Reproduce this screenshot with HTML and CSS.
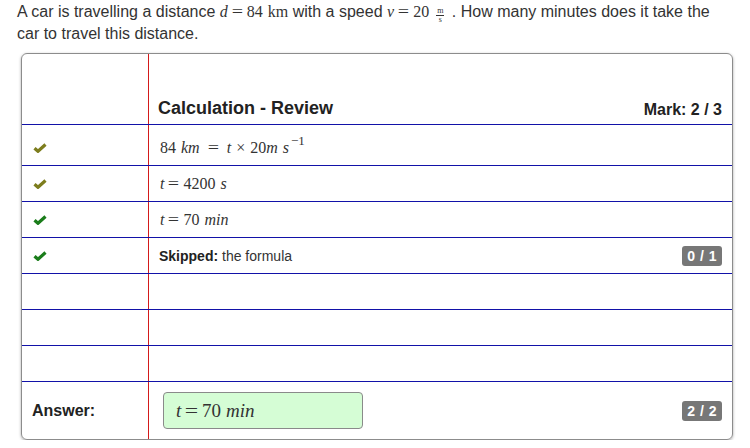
FILE: index.html
```html
<!DOCTYPE html>
<html>
<head>
<meta charset="utf-8">
<link rel="stylesheet" href="styles.css">
</head>
<body>
<p class="question">A car is travelling a distance <span class="m"><i>d</i><span class="rel">=</span>84<span class="u">km</span></span> with a speed <span class="m"><i>v</i><span class="rel">=</span>20 <span class="frac"><span class="num">m</span><span class="den">s</span></span></span> . How many minutes does it take the car to travel this distance.</p>

<div class="card">
  <div class="row header">
    <div class="cell left"></div>
    <div class="cell right">
      <span class="title">Calculation - Review</span>
      <span class="mark">Mark: 2 / 3</span>
    </div>
  </div>
  <div class="row first">
    <div class="cell left"><svg class="check olive" viewBox="0 0 14 10"><path d="M1.5 5.2 L5 8.3 L12.5 1.5" /></svg></div>
    <div class="cell right"><span class="m eq">84<i class="u">km</i><span class="rel wide">=</span><i>t</i><span class="bin">×</span>20<i>m</i><i class="u">s</i><sup>−1</sup></span></div>
  </div>
  <div class="row">
    <div class="cell left"><svg class="check olive" viewBox="0 0 14 10"><path d="M1.5 5.2 L5 8.3 L12.5 1.5" /></svg></div>
    <div class="cell right"><span class="m eq"><i>t</i><span class="rel">=</span>4200<i class="u">s</i></span></div>
  </div>
  <div class="row">
    <div class="cell left"><svg class="check green" viewBox="0 0 14 10"><path d="M1.5 5.2 L5 8.3 L12.5 1.5" /></svg></div>
    <div class="cell right"><span class="m eq"><i>t</i><span class="rel">=</span>70<i class="u">min</i></span></div>
  </div>
  <div class="row">
    <div class="cell left"><svg class="check green" viewBox="0 0 14 10"><path d="M1.5 5.2 L5 8.3 L12.5 1.5" /></svg></div>
    <div class="cell right"><span class="skip"><b>Skipped:</b> the formula</span><span class="badge">0 / 1</span></div>
  </div>
  <div class="row"><div class="cell left"></div><div class="cell right"></div></div>
  <div class="row"><div class="cell left"></div><div class="cell right"></div></div>
  <div class="row"><div class="cell left"></div><div class="cell right"></div></div>
  <div class="row answer">
    <div class="cell left"><span class="alabel">Answer:</span></div>
    <div class="cell right">
      <div class="abox"><span class="m"><i>t</i><span class="rel">=</span>70<i class="u">min</i></span></div>
      <span class="badge">2 / 2</span>
    </div>
  </div>
</div>
</body>
</html>
```

FILE: styles.css
```css
* { box-sizing: border-box; }
body {
  margin: 0;
  background: #fff;
  font-family: "Liberation Sans", Arial, sans-serif;
  color: #333;
}
.question {
  margin: 0;
  padding: 1px 17px 0 17px;
  font-size: 16px;
  line-height: 22px;
  width: 745px;
}
.m {
  font-family: "Liberation Serif", "Times New Roman", serif;
  font-size: 16px;
  white-space: nowrap;
}
.m i { font-style: italic; }
.rel { display: inline-block; margin: 0 5px; transform: scaleX(1.25); }
.rel.wide { margin: 0 9px; }
.bin { margin: 0 5px; }
.u { margin-left: 5px; }
.frac {
  display: inline-flex;
  flex-direction: column;
  align-items: center;
  vertical-align: 4px;
  font-size: 8px;
  line-height: 6px;
  margin: 0 3px 0 3px;
}
.frac .num { border-bottom: 1px solid #333; padding: 0 1px 1px; }
.frac .den { padding-top: 1px; }
.card {
  margin: 8px 0 0 21px;
  width: 712px;
  border: 1px solid #8c8c8c;
  border-radius: 6px;
  box-shadow: 0 1px 3px rgba(0,0,0,0.35);
  overflow: hidden;
}
.row {
  display: flex;
  height: 36px;
  border-bottom: 1px solid #1212a8;
}
.row.header { height: 71px; }
.row.first { height: 41px; }
.row.answer { height: 57px; border-bottom: none; }
.cell { display: flex; align-items: center; }
.left {
  width: 127px;
  border-right: 1px solid #d41a1a;
  padding-left: 11px;
}
.right {
  flex: 1;
  padding: 0 10px 0 11px;
  justify-content: space-between;
}
.header .right { align-items: flex-end; padding-bottom: 5px; padding-left: 9px; }
.title { font-weight: bold; font-size: 18px; color: #222; }
.mark { font-weight: bold; font-size: 16px; color: #222; }
.check { width: 14px; height: 10px; }
.first .left { padding-top: 5px; }
.check path { fill: none; stroke-width: 3.2; stroke-linecap: butt; stroke-linejoin: miter; }
.check.olive path { stroke: #7d7d1e; }
.check.green path { stroke: #1b7d1b; }
.eq { color: #333; }
.first .eq { padding-top: 6px; }
sup { font-size: 13px; vertical-align: 8px; line-height: 0; margin-left: 2px; }
.skip { font-size: 14px; color: #333; padding-left: 0; margin-left: -1px; }
.skip b { color: #222; }
.badge {
  background: #777;
  color: #fff;
  font-weight: bold;
  font-size: 14px;
  line-height: 20px;
  height: 20px;
  padding: 0 5px;
  border-radius: 3px;
  letter-spacing: 0.5px;
}
.alabel { font-weight: bold; font-size: 16px; color: #222; }
.answer .left { padding-left: 10px; }
.answer .right { padding-left: 14px; }
.abox {
  width: 200px;
  height: 37px;
  background: #d5fdd5;
  border: 1px solid #8a8a8a;
  border-radius: 4px;
  display: flex;
  align-items: center;
  padding-left: 12px;
}
.abox .m { font-size: 19px; }
```
